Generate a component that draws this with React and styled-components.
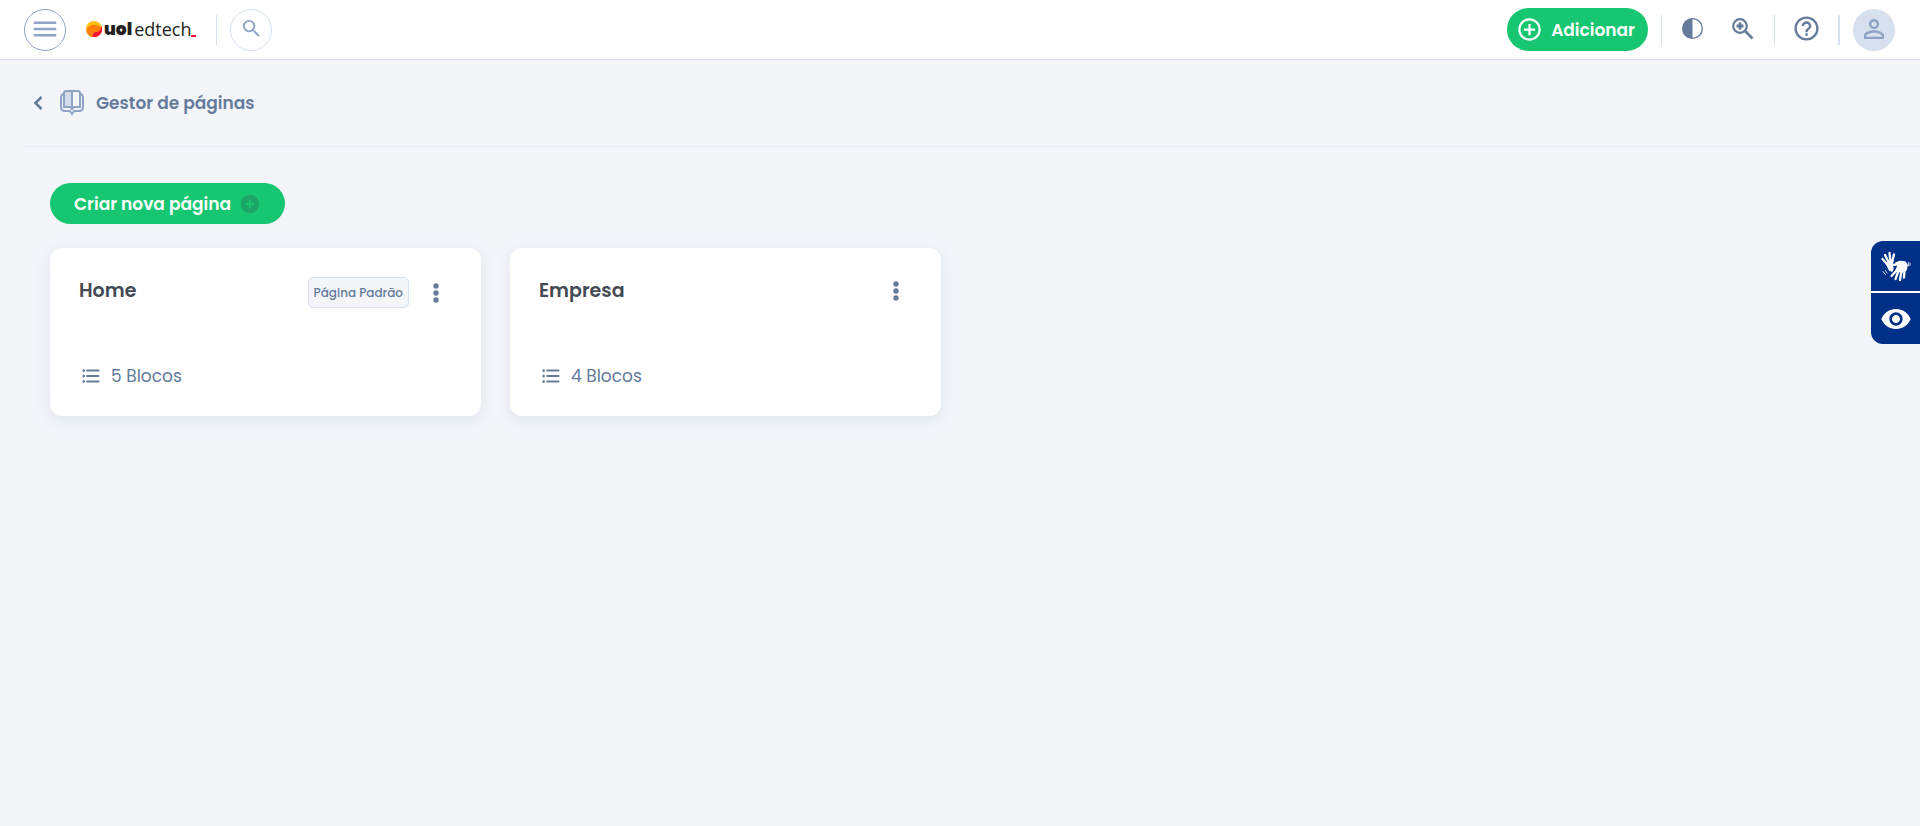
import React from "react";
import styled, { createGlobalStyle } from "styled-components";
import {
  MdAddCircle,
  MdAddCircleOutline,
  MdFormatListBulleted,
  MdHelpOutline,
  MdMenu,
  MdPersonOutline,
  MdSearch,
  MdVisibility,
} from "react-icons/md";
import { BsCircleHalf } from "react-icons/bs";

const pages = [
  { id: 1, name: "Home", blocks: 5, isDefault: true },
  { id: 2, name: "Empresa", blocks: 4, isDefault: false },
];

const Logo = () => (
  <LogoLink href="#" aria-label="uol edtech">
    <svg width="16" height="16" viewBox="0 0 16 16">
      <circle cx="8" cy="8" r="8" fill="#ffc20e" />
      <path d="M1 12A8 8 0 0 0 16 8C16 6 14 5 12 5C9 3 6 4 4 5C1 6 0 9 1 12Z" fill="#ff7d0b" />
      <path d="M7 16A8 8 0 0 0 15.500 5C15 9 13 11 11 11C8 11 6 13 7 16Z" fill="#ff1133" />
    </svg>
    <LogoBold>uol</LogoBold>
    <LogoThin>edtech</LogoThin>
    <LogoDash />
  </LogoLink>
);

const ZoomIcon = () => (
  <svg width="22" height="22" viewBox="0 0 22 22" fill="none" stroke="currentColor">
    <circle cx="8" cy="8" r="6.800" strokeWidth="2.200" />
    <path d="M13 13L20.500 20.500" strokeWidth="2.600" />
    <path d="M8 4.500V11.500M4.500 8H11.500" strokeWidth="2.800" />
  </svg>
);

const BookIcon = () => (
  <svg width="24" height="26" viewBox="0 0 24 26" fill="none" stroke="#8fa3c4" strokeWidth="2">
    <path d="M12 1H6Q4 1 4 3V17H9Q12 17 12 20Z" fill="#d3dcea" />
    <path d="M12 1H18Q20 1 20 3V17H15Q12 17 12 20Z" />
    <path d="M4 4Q1 4 1 8V17Q1 21 5 21H10L12 24L14 21H19Q23 21 23 17V8Q23 4 20 4" />
  </svg>
);

const HandsIcon = () => (
  <svg width="32" height="32" viewBox="0 0 32 32" fill="none" stroke="#fff" strokeLinecap="round" strokeLinejoin="round">
    <path d="M7 14L2.500 9M8.500 12L5 5M10.500 12L9.500 3M12 12L14 4.500" strokeWidth="2.300" />
    <path d="M6.500 14L10 11.500L13 11L11 14.500L13 18L12 21L9.500 20Z" fill="#fff" strokeWidth="1.600" />
    <path d="M12 14.500Q15 15.500 18 13.500" strokeWidth="2.400" />
    <path d="M16 13L20 11.500L25 12L27 15L26 20L22 22L16 20.500L18 16Z" fill="#fff" strokeWidth="1.600" />
    <path d="M16.500 20.500L11.500 26M18.500 21L15.500 29M21.500 21L20 30M24.500 20L24 27.500" strokeWidth="2.300" />
    <path d="M28.500 12.500V16M30 13V15.500M3 21.500L5.500 24.500M5.500 20.500L7 23" strokeWidth="0.800" />
  </svg>
);

const DotsIcon = () => (
  <svg width="6" height="20" viewBox="0 0 6 20" fill="currentColor">
    <circle cx="3" cy="3" r="2.700" />
    <circle cx="3" cy="10" r="2.700" />
    <circle cx="3" cy="17" r="2.700" />
  </svg>
);

const PageCard = ({ page }) => (
  <Card>
    <CardTop>
      <CardTitle>{page.name}</CardTitle>
      <CardActions>
        {page.isDefault && <Badge>Página Padrão</Badge>}
        <DotsButton aria-label={`Opções de ${page.name}`}>
          <DotsIcon />
        </DotsButton>
      </CardActions>
    </CardTop>
    <Blocks>
      <MdFormatListBulleted size={22} />
      {page.blocks} Blocos
    </Blocks>
  </Card>
);

const App = () => {
  return (
    <>
      <GlobalStyle />
      <Header>
        <HeaderSide>
          <CircleButton $border="#8fa3c4" aria-label="Menu">
            <MdMenu size={30} />
          </CircleButton>
          <Logo />
          <Divider />
          <CircleButton $border="#d6e0ef" aria-label="Buscar">
            <MdSearch size={23} />
          </CircleButton>
        </HeaderSide>
        <HeaderSide>
          <AddButton>
            <MdAddCircleOutline size={27} />
            Adicionar
          </AddButton>
          <Divider />
          <Tools $padding={7}>
            <IconButton aria-label="Contraste">
              <BsCircleHalf size={21} />
            </IconButton>
            <IconButton aria-label="Zoom">
              <ZoomIcon />
            </IconButton>
          </Tools>
          <Divider />
          <Tools $padding={4}>
            <IconButton aria-label="Ajuda">
              <MdHelpOutline size={29} />
            </IconButton>
          </Tools>
          <Divider $width={2} />
          <Avatar aria-label="Perfil">
            <MdPersonOutline size={30} />
          </Avatar>
        </HeaderSide>
      </Header>
      <TitleBar>
        <BackLink href="#" aria-label="Voltar">
          <svg width="10" height="14" viewBox="0 0 10 14" fill="none" stroke="currentColor" strokeWidth="2.500">
            <path d="M8.500 1L2.500 7L8.500 13" />
          </svg>
        </BackLink>
        <BookIcon />
        <Title>Gestor de páginas</Title>
      </TitleBar>
      <Content>
        <CreateButton>
          Criar nova página
          <MdAddCircle size={22} />
        </CreateButton>
        <Grid>
          {pages.map((page) => (
            <PageCard key={page.id} page={page} />
          ))}
        </Grid>
      </Content>
      <Accessibility>
        <AccessButton aria-label="Libras">
          <HandsIcon />
        </AccessButton>
        <AccessButton aria-label="Recursos visuais">
          <MdVisibility size={32} />
        </AccessButton>
      </Accessibility>
    </>
  );
};

const GlobalStyle = createGlobalStyle`
  * {
    box-sizing: border-box;
  }
  body {
    margin: 0;
    background: #f3f5f9;
    color: #647b9c;
    font-family: Poppins, Inter, sans-serif;
    font-size: 17px;
  }
  button {
    display: flex;
    align-items: center;
    padding: 0;
    border: none;
    background: none;
    color: inherit;
    font: inherit;
    cursor: pointer;
  }
  svg {
    display: block;
    flex-shrink: 0;
  }
`;

const Header = styled.header`
  display: flex;
  justify-content: space-between;
  height: 60px;
  padding: 0 25px 0 24px;
  background: #fff;
  border-bottom: 1px solid #d6e0ef;
`;
const HeaderSide = styled.div`
  display: flex;
  align-items: center;
  gap: 13px;
`;
const CircleButton = styled.button`
  justify-content: center;
  width: 42px;
  height: 42px;
  padding-bottom: 2px;
  border: 1px solid ${(props) => props.$border};
  border-radius: 50%;
  color: #8fa3c4;
`;
const LogoLink = styled.a`
  display: flex;
  align-items: center;
  height: 28px;
  margin: 0 7px;
  padding-bottom: 2px;
  color: #231f20;
  text-decoration: none;
`;
const LogoBold = styled.span`
  margin-left: 2px;
  font-size: 17px;
  font-weight: 900;
`;
const LogoThin = styled.span`
  margin-left: 2px;
  font-family: "Open Sans", sans-serif;
  font-size: 18px;
`;
const LogoDash = styled.span`
  align-self: flex-end;
  width: 5px;
  height: 2px;
  margin-bottom: 5px;
  background: #ff1133;
`;
const Divider = styled.span`
  width: ${(props) => props.$width || 1}px;
  height: 30px;
  background: #d6e0ef;
`;
const AddButton = styled.button`
  gap: 8px;
  height: 43px;
  padding: 0 13px 0 9px;
  border-radius: 22px;
  background: #17c671;
  color: #fff;
  font-weight: 600;
`;
const Tools = styled.div`
  display: flex;
  gap: 29px;
  padding: 0 ${(props) => props.$padding}px;
`;
const IconButton = styled.button`
  height: 30px;
  padding-bottom: 2px;
`;
const Avatar = styled(CircleButton)`
  border: none;
  background: #d6e0ef;
`;

const TitleBar = styled.div`
  display: flex;
  align-items: center;
  height: 87px;
  margin-left: 24px;
  padding-left: 9px;
  border-bottom: 1px solid #e9ecf1;
`;
const BackLink = styled.a`
  margin-right: 17px;
  color: #647b9c;
`;
const Title = styled.h1`
  margin: 0 0 0 12px;
  font-size: 17px;
  font-weight: 600;
`;

const Content = styled.main`
  padding: 36px 59px 36px 50px;
`;
const CreateButton = styled.button`
  gap: 8px;
  height: 41px;
  padding: 0 24px;
  border-radius: 21px;
  background: #17c671;
  color: #fff;
  font-weight: 600;
  svg {
    color: #1da567;
  }
`;
const Grid = styled.div`
  display: grid;
  grid-template-columns: repeat(4, 1fr);
  gap: 29px;
  margin-top: 24px;
`;
const Card = styled.article`
  display: flex;
  flex-direction: column;
  justify-content: space-between;
  min-height: 168px;
  padding: 29px 42px 28px 29px;
  border-radius: 12px;
  background: #fff;
  box-shadow: 0 4px 16px rgba(143, 163, 196, 0.2);
`;
const CardTop = styled.div`
  display: flex;
  justify-content: space-between;
  align-items: flex-start;
`;
const CardTitle = styled.h2`
  margin: 0;
  color: #444a54;
  font-size: 19px;
  font-weight: 600;
  line-height: 28px;
`;
const CardActions = styled.div`
  display: flex;
  align-items: center;
  gap: 24px;
`;
const Badge = styled.span`
  padding: 0 5px;
  border: 1px solid #d6e0ef;
  border-radius: 5px;
  background: #f3f5f9;
  font-size: 12px;
  font-weight: 500;
  line-height: 29px;
`;
const DotsButton = styled.button`
  justify-content: center;
  height: 28px;
`;
const Blocks = styled.p`
  display: flex;
  align-items: center;
  gap: 9px;
  margin: 0;
  padding-left: 1px;
  line-height: 24px;
`;

const Accessibility = styled.aside`
  position: fixed;
  top: 241px;
  right: 0;
  display: grid;
  grid-template-rows: 50px 51px;
  gap: 2px;
  overflow: hidden;
  border-radius: 12px 0 0 12px;
  background: #fff;
`;
const AccessButton = styled.button`
  justify-content: center;
  width: 49px;
  background: #003087;
  color: #fff;
`;

export default App;
